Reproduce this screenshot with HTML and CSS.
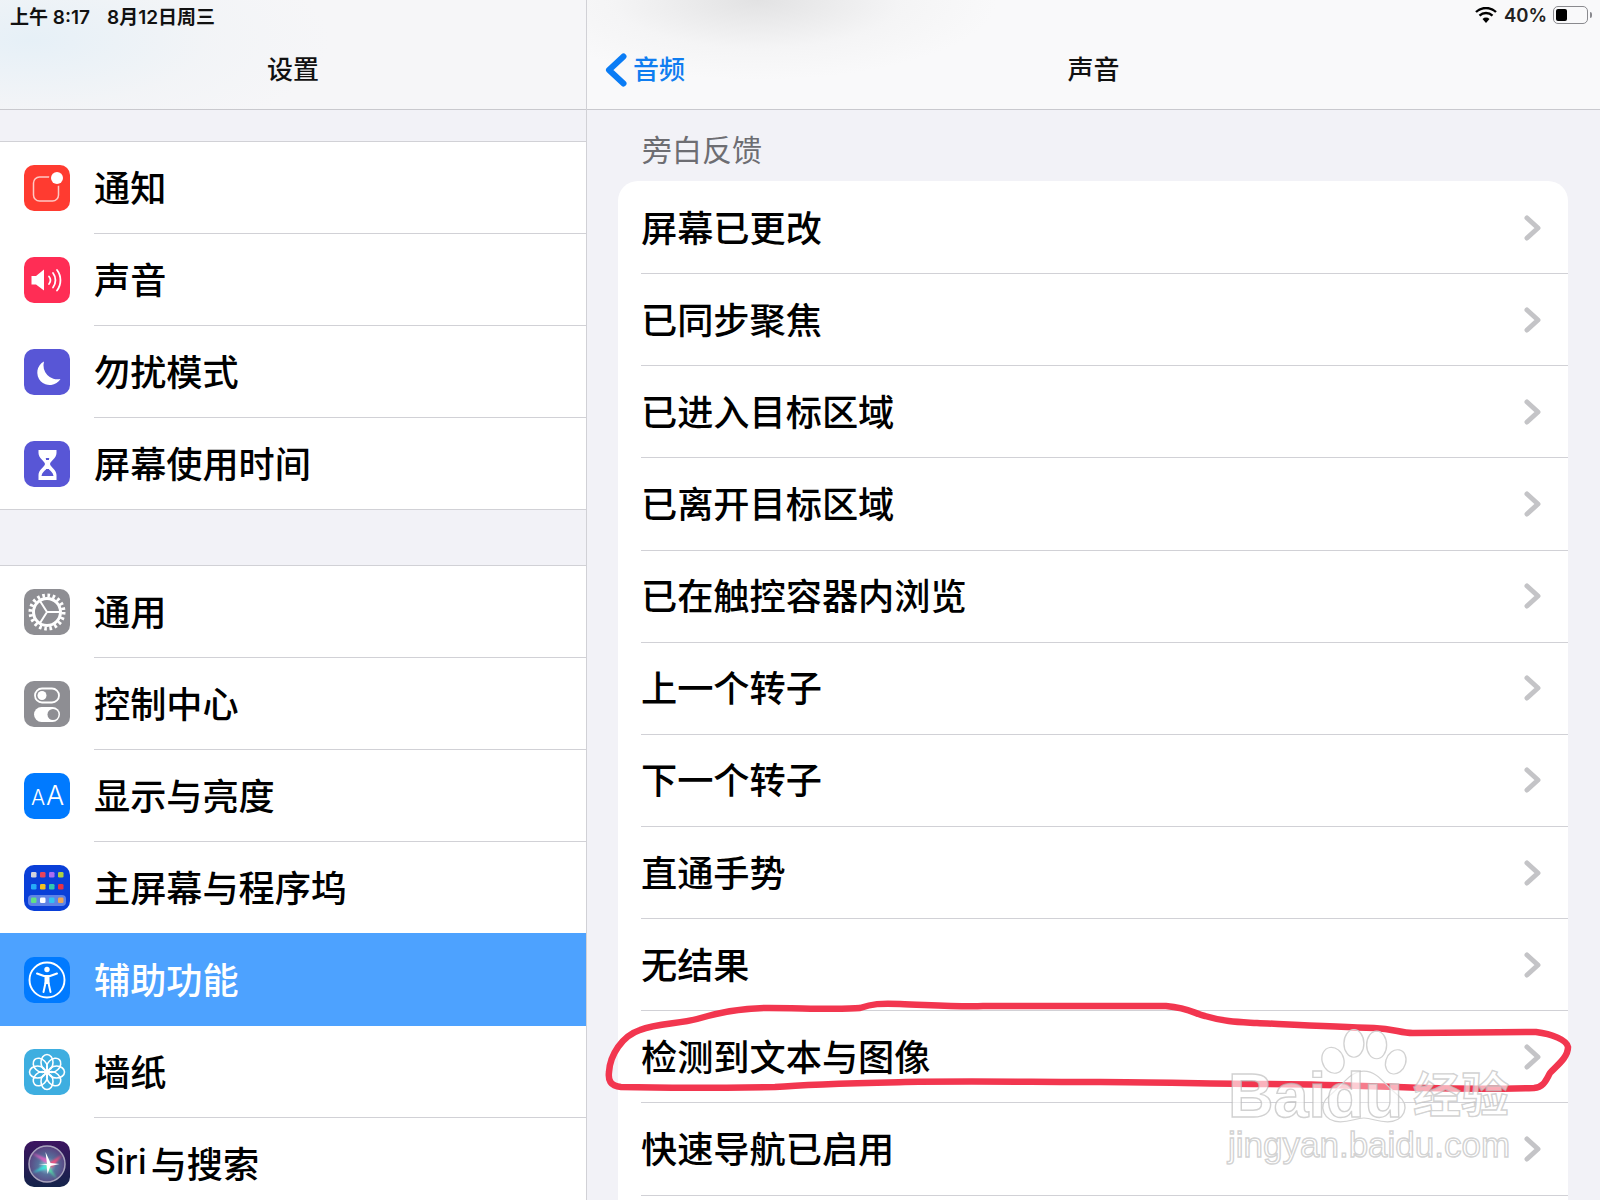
FILE: index.html
```html
<!DOCTYPE html>
<html lang="zh-CN">
<head>
<meta charset="utf-8">
<title>声音</title>
<link rel="stylesheet" href="styles.css">
</head>
<body>
<svg class="defs" width="0" height="0" aria-hidden="true"><defs>
  <symbol id="chev" viewBox="0 0 17 26"><path d="M3 3l11 10L3 23" fill="none" stroke="#c4c4c7" stroke-width="5" stroke-linecap="round" stroke-linejoin="round"/></symbol>
</defs></svg>
<div class="app">
  <aside class="master">
    <header class="head head-left">
      <div class="status"><span>上午 8:17</span><span>8月12日周三</span></div>
      <div class="nav"><h1 class="title">设置</h1></div>
    </header>
    <section class="group group-first">
      <div class="row"><svg class="icon" viewBox="0 0 46 46"><rect width="46" height="46" rx="10" fill="#ff3b30"/><rect x="9.5" y="12" width="25" height="24" rx="6" fill="none" stroke="#ffc9c4" stroke-width="1.5"/><circle cx="33" cy="13" r="8" fill="#ff3b30"/><circle cx="33" cy="13" r="6" fill="#fff"/></svg><div class="label">通知</div></div>
      <div class="row"><svg class="icon" viewBox="0 0 46 46"><rect width="46" height="46" rx="10" fill="#ff2d55"/><path d="M7.5 19h4.5l8-6.5v21L12 27.5H7.5z" fill="#fff"/><g fill="none" stroke="#fff" stroke-width="1.8" stroke-linecap="round"><path d="M25 19.5a6 6 0 0 1 0 7.5"/><path d="M29 16a12 12 0 0 1 0 14.5"/><path d="M33 13a17 17 0 0 1 0 20.5"/></g></svg><div class="label">声音</div></div>
      <div class="row"><svg class="icon" viewBox="0 0 46 46"><rect width="46" height="46" rx="10" fill="#5856d6"/><path d="M20 12.500A12.500 12.500 0 1 0 36.500 30 14 14 0 0 1 20 12.500z" fill="#fff"/></svg><div class="label">勿扰模式</div></div>
      <div class="row row-end"><svg class="icon" viewBox="0 0 46 46"><rect width="46" height="46" rx="10" fill="#5856d6"/><path d="M14.500 9h18v3c0 5-6 8-6.500 11 .5 3 6.500 6 6.500 11v5h-18v-5c0-5 6-8 6.500-11-.5-3-6.500-6-6.500-11z" fill="#fff"/><path d="M19 15h9l-3 2.500v11c2 2 4 3 4.500 6.500h-12c.5-3.500 2.500-4.500 4.500-6.500v-11z" fill="#5856d6"/><path d="M21.500 19h4v9h-4z" fill="#fff"/><path d="M18 15h11v2H18z" fill="#fff"/></svg><div class="label">屏幕使用时间</div></div>
    </section>
    <section class="group">
      <div class="row"><svg class="icon" viewBox="0 0 46 46"><rect width="46" height="46" rx="10" fill="#8e8e93"/><g fill="none" stroke="#fff"><circle cx="23" cy="23" r="16.500" stroke-width="4" stroke-dasharray="2.600 2.580"/><circle cx="23" cy="23" r="13.500" stroke-width="3"/><path d="M23 23H36M23 23L16 12M23 23L16 34" stroke-width="2"/></g></svg><div class="label">通用</div></div>
      <div class="row"><svg class="icon" viewBox="0 0 46 46"><rect width="46" height="46" rx="10" fill="#8e8e93"/><rect x="11" y="7.500" width="24" height="14" rx="7" fill="none" stroke="#fff" stroke-width="1.800"/><circle cx="18" cy="14.500" r="4.500" fill="#fff"/><rect x="10" y="26" width="26" height="15" rx="7.500" fill="#fff"/><circle cx="29" cy="33.500" r="5.500" fill="#8e8e93"/></svg><div class="label">控制中心</div></div>
      <div class="row"><svg class="icon" viewBox="0 0 46 46"><rect width="46" height="46" rx="10" fill="#007aff"/><text class="aa aa-s" x="7" y="32">A</text><text class="aa aa-l" x="22" y="32">A</text></svg><div class="label">显示与亮度</div></div>
      <div class="row row-pre"><svg class="icon" viewBox="0 0 46 46"><rect width="46" height="46" rx="10" fill="#0a3fd8"/><g><rect x="7" y="7" width="5.500" height="5.500" rx="1.300" fill="#d3d3dc"/><rect x="16" y="7" width="5.500" height="5.500" rx="1.300" fill="#e8445c"/><rect x="25" y="7" width="5.500" height="5.500" rx="1.300" fill="#a96cf2"/><rect x="34" y="7" width="5.500" height="5.500" rx="1.300" fill="#aed142"/><rect x="7" y="19" width="5.500" height="5.500" rx="1.300" fill="#25aaf8"/><rect x="16" y="19" width="5.500" height="5.500" rx="1.300" fill="#f3c221"/><rect x="25" y="19" width="5.500" height="5.500" rx="1.300" fill="#30c9b0"/><rect x="34" y="19" width="5.500" height="5.500" rx="1.300" fill="#e83245"/><rect x="4" y="30" width="38" height="11" rx="4" fill="#5f83e6"/><rect x="7" y="32.500" width="5.500" height="5.500" rx="1.300" fill="#62e083"/><rect x="16" y="32.500" width="5.500" height="5.500" rx="1.300" fill="#fff"/><rect x="25" y="32.500" width="5.500" height="5.500" rx="1.300" fill="#30c2f2"/><rect x="34" y="32.500" width="5.500" height="5.500" rx="1.300" fill="#f0a552"/></g></svg><div class="label">主屏幕与程序坞</div></div>
      <div class="row row-sel"><svg class="icon" viewBox="0 0 46 46"><rect width="46" height="46" rx="10" fill="#007aff"/><circle cx="23" cy="23" r="17.500" fill="none" stroke="#fff" stroke-width="1.900"/><circle cx="23" cy="12.500" r="2.700" fill="#fff"/><path d="M13 16.500l7 2.500h6l7-2.500M21.500 26l-2 9M24.500 26l2 9" fill="none" stroke="#fff" stroke-width="2" stroke-linecap="round" stroke-linejoin="round"/><path d="M20.500 19h5v8h-5z" fill="#fff"/></svg><div class="label">辅助功能</div></div>
      <div class="row"><svg class="icon" viewBox="0 0 46 46"><rect width="46" height="46" rx="10" fill="#3eaee0"/><g fill="none" stroke="#fff" stroke-width="1.600"><ellipse cx="23" cy="13.500" rx="6" ry="8"/><ellipse cx="23" cy="13.500" rx="6" ry="8" transform="rotate(45 23 23)"/><ellipse cx="23" cy="13.500" rx="6" ry="8" transform="rotate(90 23 23)"/><ellipse cx="23" cy="13.500" rx="6" ry="8" transform="rotate(135 23 23)"/><ellipse cx="23" cy="13.500" rx="6" ry="8" transform="rotate(180 23 23)"/><ellipse cx="23" cy="13.500" rx="6" ry="8" transform="rotate(225 23 23)"/><ellipse cx="23" cy="13.500" rx="6" ry="8" transform="rotate(270 23 23)"/><ellipse cx="23" cy="13.500" rx="6" ry="8" transform="rotate(315 23 23)"/></g><circle cx="23" cy="23" r="2.500" fill="#fff"/></svg><div class="label">墙纸</div></div>
      <div class="row row-end"><svg class="icon" viewBox="0 0 46 46"><defs><linearGradient id="sb" x1="0" y1="0" x2="0" y2="1"><stop offset="0" stop-color="#3c1560"/><stop offset="1" stop-color="#14234a"/></linearGradient><radialGradient id="sg" cx=".5" cy=".55" r=".55"><stop offset="0" stop-color="#8fd8e0"/><stop offset=".45" stop-color="#57709c"/><stop offset="1" stop-color="#5a3f7e"/></radialGradient><filter id="sf"><feGaussianBlur stdDeviation=".8"/></filter></defs><rect width="46" height="46" rx="10" fill="url(#sb)"/><circle cx="23" cy="23" r="18" fill="url(#sg)" stroke="#a8a4bd" stroke-width="1.500"/><g filter="url(#sf)"><path d="M23 23L8 12l16 6z" fill="#e060c0"/><path d="M23 23L38 14l-10 13z" fill="#f0507e"/><path d="M23 23L8 32l16-5z" fill="#30e8e0"/><path d="M23 23L33 38l-12-12z" fill="#50f0a0"/></g><path d="M23 23l-1.500-12 5 11 9 1-9 2-3 8-1-9-8-1z" fill="#fff"/></svg><div class="label"><span class="latin">Siri</span>与搜索</div></div>
    </section>
  </aside>
  <main class="detail">
    <header class="head head-right">
      <div class="status status-right">
        <svg class="wifi" viewBox="0 0 22 16"><path d="M11 16l-3.500-4a5 5 0 0 1 7 0z" fill="#000"/><path d="M4.500 8.600a9.500 9.500 0 0 1 13 0M1 5a14.500 14.500 0 0 1 20 0" fill="none" stroke="#000" stroke-width="2.400"/></svg>
        <span class="pct">40%</span>
        <span class="battery"><span class="battery-fill"></span></span><span class="battery-nub"></span>
      </div>
      <div class="nav">
        <a class="back"><svg class="back-chev" viewBox="0 0 22 34"><path d="M18.500 3.500L4 17l14.500 13.500" fill="none" stroke="#0a7cf5" stroke-width="6" stroke-linecap="round" stroke-linejoin="round"/></svg><span>音频</span></a>
        <h1 class="title">声音</h1>
      </div>
    </header>
    <div class="section-title">旁白反馈</div>
    <div class="card">
      <div class="item"><div class="item-in"><span class="item-text">屏幕已更改</span><svg class="chev"><use href="#chev"/></svg></div></div>
      <div class="item"><div class="item-in"><span class="item-text">已同步聚焦</span><svg class="chev"><use href="#chev"/></svg></div></div>
      <div class="item"><div class="item-in"><span class="item-text">已进入目标区域</span><svg class="chev"><use href="#chev"/></svg></div></div>
      <div class="item"><div class="item-in"><span class="item-text">已离开目标区域</span><svg class="chev"><use href="#chev"/></svg></div></div>
      <div class="item"><div class="item-in"><span class="item-text">已在触控容器内浏览</span><svg class="chev"><use href="#chev"/></svg></div></div>
      <div class="item"><div class="item-in"><span class="item-text">上一个转子</span><svg class="chev"><use href="#chev"/></svg></div></div>
      <div class="item"><div class="item-in"><span class="item-text">下一个转子</span><svg class="chev"><use href="#chev"/></svg></div></div>
      <div class="item"><div class="item-in"><span class="item-text">直通手势</span><svg class="chev"><use href="#chev"/></svg></div></div>
      <div class="item"><div class="item-in"><span class="item-text">无结果</span><svg class="chev"><use href="#chev"/></svg></div></div>
      <div class="item"><div class="item-in"><span class="item-text">检测到文本与图像</span><svg class="chev"><use href="#chev"/></svg></div></div>
      <div class="item"><div class="item-in"><span class="item-text">快速导航已启用</span><svg class="chev"><use href="#chev"/></svg></div></div>
    </div>
  </main>
  <svg class="scribble" viewBox="0 0 1600 1200"><path d="M769 1008C800 1008 840 1010 860 1008C872 1004 880 1003 900 1004C930 1005 960 1007 983 1006C1050 1006 1110 1006 1166 1006C1190 1008 1195 1014 1205 1016C1225 1022 1240 1022 1257 1023C1300 1025 1340 1027 1374 1028C1395 1029 1400 1033 1413 1033C1450 1033 1500 1032 1536 1032C1552 1034 1567 1040 1568 1047C1568 1058 1556 1066 1550 1073C1546 1080 1544 1087 1534 1088C1500 1089 1460 1089 1426 1088C1380 1087 1320 1084 1270 1084C1210 1084 1160 1082 1100 1082C1030 1082 970 1081 905 1082C860 1083 810 1084 775 1087C720 1088 660 1088 621 1087C610 1086 608 1080 609 1072C610 1055 622 1036 640 1030C657 1023 680 1024 697 1019C720 1012 745 1008 769 1008Z" fill="none" stroke="#f2364f" stroke-width="6.500" stroke-linejoin="round"/></svg>
  <div class="watermark">
    <svg class="paw" viewBox="0 0 110 130" preserveAspectRatio="none"><g fill="rgba(255,255,255,.35)" stroke="#d2d2d2" stroke-width="1.500"><ellipse cx="22" cy="42" rx="12" ry="17" transform="rotate(-12 22 42)"/><ellipse cx="45" cy="20" rx="11" ry="18"/><ellipse cx="70" cy="22" rx="11" ry="18"/><ellipse cx="91" cy="44" rx="11" ry="16" transform="rotate(14 91 44)"/><path d="M56 56C72 56 80 76 94 88C108 102 100 122 82 122C70 122 65 117 56 117C47 117 42 122 30 122C12 122 4 102 18 88C32 76 40 56 56 56Z"/></g></svg>
    <span class="wm-baidu">Baidu</span>
    <span class="wm-jy">经验</span>
    <span class="wm-url">jingyan.baidu.com</span>
  </div>
</div>
</body>
</html>
```

FILE: styles.css
```css
* { box-sizing: border-box; }
html, body { margin: 0; padding: 0; height: 100%; }
body { background: #f2f2f7; overflow: hidden; font-family: "Inter", "Noto Sans CJK SC", sans-serif; color: #000; }
.defs { position: absolute; }
.app { position: relative; display: flex; width: 1600px; height: 1200px; overflow: hidden; }

.master { width: 587px; flex: none; border-right: 1px solid #d1d1d6; background: #f2f2f7; }
.detail { flex: 1; display: flex; flex-direction: column; min-width: 0; }

.head { height: 110px; border-bottom: 1px solid #c9c9ce; display: flex; flex-direction: column; }
.head-left { background: radial-gradient(ellipse 300px 110px at 30px 40px, #e6f0f7 0%, rgba(240,243,246,.6) 60%, rgba(246,246,248,0) 100%), #f6f6f8; }
.head-right { background: radial-gradient(ellipse 240px 80px at 170px 0, #e2e2e3 0%, rgba(240,240,241,.5) 60%, rgba(249,249,250,0) 100%), #f9f9fa; }

.status { height: 30px; display: flex; align-items: center; gap: 17px; padding-left: 10px; font-size: 19px; font-weight: 600; color: #111; }
.status-right { justify-content: flex-end; gap: 0; padding: 0 8px 0 0; }
.wifi { width: 22px; height: 16px; margin-right: 7px; }
.pct { font-size: 18.500px; font-weight: 600; margin-right: 6px; color: #222; }
.battery { width: 35px; height: 18px; border: 1.500px solid #8a8a8e; border-radius: 5px; padding: 2px; display: flex; }
.battery-fill { width: 11px; background: #000; border-radius: 2px; }
.battery-nub { width: 2px; height: 6px; margin-left: 2px; background: #8a8a8e; border-radius: 0 2px 2px 0; }

.nav { flex: 1; display: flex; align-items: center; justify-content: center; position: relative; }
.title { margin: 0; font-size: 26px; font-weight: 500; line-height: 36px; color: #111; }
.back { position: absolute; left: 18px; top: 23px; display: flex; align-items: center; gap: 6px; color: #0f7df0; font-size: 26px; font-weight: 500; line-height: 34px; }
.back-chev { width: 22px; height: 34px; }

.group { margin-top: 55px; background: #fff; border-top: 1px solid #d1d1d6; border-bottom: 1px solid #d1d1d6; }
.group-first { margin-top: 31px; }
.row { height: 92px; display: flex; align-items: center; padding-left: 24px; gap: 24px; background: #fff; }
.icon { width: 46px; height: 46px; flex: none; }
.label { flex: 1; align-self: stretch; display: flex; align-items: center; padding-bottom: 4px; font-size: 36.150px; font-weight: 500; border-bottom: 1px solid #d1d1d6; }
.row-end { height: 91px; }
.row-end .label, .row-pre .label { border-bottom: 0; }
.row-sel { margin-top: -1px; height: 93px; background: #4da2ff; }
.row-sel .label { color: #fff; border-bottom: 0; }
.latin { margin-right: 4px; font-size: 34px; }
.aa { fill: #fff; font-family: "Inter", sans-serif; font-weight: 300; }
.aa-s { font-size: 21px; }
.aa-l { font-size: 27px; }

.section-title { padding: 19px 0 10px 55px; font-size: 30px; line-height: 42px; color: #6d6d72; }
.card { flex: 1; margin: 0 32px 0 31px; padding-top: 1px; background: #fff; border-radius: 20px 20px 0 0; }
.item { height: 92.150px; padding-left: 23px; }
.item-in { height: 100%; display: flex; align-items: center; justify-content: space-between; padding-right: 27px; border-bottom: 1px solid #d1d1d6; }
.item-text { font-size: 36.200px; font-weight: 500; margin-bottom: 4px; }
.chev { width: 17px; height: 26px; flex: none; }

.scribble { position: absolute; left: 0; top: 0; width: 1600px; height: 1200px; pointer-events: none; }

.watermark { position: absolute; left: 1228px; top: 1030px; width: 290px; height: 140px; pointer-events: none; }
.paw { position: absolute; left: 85px; top: -2px; width: 100px; height: 100px; }
.wm-baidu, .wm-jy, .wm-url { position: absolute; font-family: "Liberation Sans", "Noto Sans CJK SC", sans-serif; color: rgba(255,255,255,.62); -webkit-text-stroke: 1.400px rgba(185,185,185,.65); white-space: nowrap; }
.wm-baidu { left: 0; top: 34px; font-size: 63px; line-height: 62px; font-weight: 700; }
.wm-jy { left: 185px; top: 36px; font-size: 48px; line-height: 60px; font-weight: 700; }
.wm-url { left: 0; top: 97px; font-size: 35px; line-height: 36px; }
```
